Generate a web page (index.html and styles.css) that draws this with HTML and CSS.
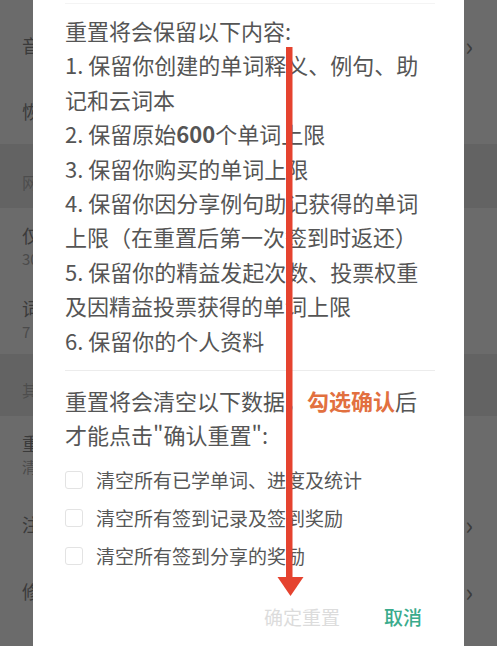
FILE: index.html
```html
<!DOCTYPE html>
<html lang="zh-CN">
<head>
  <meta charset="UTF-8" />
  <meta name="viewport" content="width=device-width, initial-scale=1.0" />
  <title>设置</title>
  <link rel="stylesheet" href="styles.css">
</head>
<body>

  <!-- SETTINGS LIST (behind the dialog) -->
  <div class="settings">
    <div class="row row-1">
      <div class="row-text"><span class="row-title">音频设置</span></div>
      <span class="chevron">&#x203A;</span>
    </div>
    <div class="row row-2">
      <div class="row-text"><span class="row-title">恢复默认设置</span></div>
    </div>
    <div class="section sec-1">网络</div>
    <div class="row row-3">
      <div class="row-text">
        <span class="row-title">仅在WiFi下自动下载</span>
        <span class="row-sub">30M 以内的音频包</span>
      </div>
      <span class="toggle"></span>
    </div>
    <div class="row row-4">
      <div class="row-text">
        <span class="row-title">词库缓存天数</span>
        <span class="row-sub">7</span>
      </div>
    </div>
    <div class="section sec-2">其他</div>
    <div class="row row-5">
      <div class="row-text">
        <span class="row-title">重置学习进度</span>
        <span class="row-sub">清空所有学习记录</span>
      </div>
    </div>
    <div class="row row-6">
      <div class="row-text"><span class="row-title">注销账号</span></div>
      <span class="chevron">&#x203A;</span>
    </div>
    <div class="row row-7">
      <div class="row-text"><span class="row-title">修改密码</span></div>
      <span class="chevron">&#x203A;</span>
    </div>
  </div>

  <div class="mask"></div>

  <!-- RESET DIALOG -->
  <div class="dialog">
    <div class="dialog-body">
      <p class="keep">
        重置将会保留以下内容:<br>
        1. 保留你创建的单词释义、例句、助记和云词本<br>
        2. 保留原始<b>600</b>个单词上限<br>
        3. 保留你购买的单词上限<br>
        4. 保留你因分享例句助记获得的单词上限（在重置后第一次签到时返还）<br>
        5. 保留你的精益发起次数、投票权重及因精益投票获得的单词上限<br>
        6. 保留你的个人资料
      </p>
      <hr class="divider">
      <p class="clear">重置将会清空以下数据，<b class="hint">勾选确认</b>后才能点击"确认重置":</p>

      <label class="check"><span class="box"></span>清空所有已学单词、进度及统计</label>
      <label class="check"><span class="box"></span>清空所有签到记录及签到奖励</label>
      <label class="check"><span class="box"></span>清空所有签到分享的奖励</label>

      <div class="actions">
        <button class="btn btn-confirm" disabled>确定重置</button>
        <button class="btn btn-cancel">取消</button>
      </div>
    </div>
  </div>

  <!-- red guide arrow drawn on top -->
  <svg class="arrow" viewBox="0 0 497 646" xmlns="http://www.w3.org/2000/svg">
    <rect x="286" y="47" width="6.5" height="533" fill="#e5432f"/>
    <polygon points="277.5,577 303.5,577 290.5,596" fill="#e5432f"/>
  </svg>

</body>
</html>
```

FILE: styles.css
```css
/* RESET */
*, *::before, *::after {
  box-sizing: border-box;
  margin: 0;
  padding: 0;
}

html, body {
  width: 497px;
  height: 646px;
  overflow: hidden;
}

body {
  position: relative;
  font-family: "Noto Sans CJK SC", "Noto Sans", sans-serif;
  background: #fff;
}

/* SETTINGS LIST */
.settings {
  padding-top: 12px;
}

.row {
  display: flex;
  align-items: center;
  justify-content: space-between;
  padding: 0 22px;
}

.row-text {
  display: flex;
  flex-direction: column;
}

.row-title {
  font-size: 18px;
  line-height: 26px;
  color: #8a8a8a;
}

.row-sub {
  font-size: 15px;
  line-height: 22px;
  color: #b4b4b4;
}

.row-1 { height: 66px; }
.row-2 { height: 66px; }
.row-3 { height: 76px; }
.row-4 { height: 70px; }
.row-5 { height: 76px; }
.row-6 { height: 64px; }
.row-7 { height: 70px; }

.section {
  display: flex;
  align-items: flex-end;
  padding: 0 22px 14px;
  background: #ededed;
  font-size: 16px;
  color: #b8b8b8;
}

.sec-1 { height: 64px; }
.sec-2 { height: 62px; }

.chevron {
  font-size: 26px;
  line-height: 1;
  color: #8e8e8e;
  margin-right: 2px;
}

.toggle {
  width: 26px;
  height: 26px;
  border-radius: 50%;
  background: #d2d2d2;
  margin-right: 12px;
}

.mask {
  position: absolute;
  inset: 0;
  background: rgba(0, 0, 0, 0.58);
}

/* DIALOG */
.dialog {
  position: absolute;
  top: 0;
  left: 33px;
  width: 431px;
  height: 680px;
  background: #fff;
}

.dialog-body {
  margin: 3px 29px 0 32px;
  padding-top: 9px;
  border-top: 1px solid #f4f4f4;
  color: #555;
}

.keep, .clear {
  font-size: 22px;
  line-height: 34.4px;
}

.keep b {
  font-weight: 700;
}

.divider {
  border: none;
  border-top: 1px solid #ececec;
  margin: 13px 0 12px;
}

.hint {
  color: #e2703f;
  font-weight: 700;
}

.check {
  display: flex;
  align-items: center;
  gap: 13px;
  height: 38px;
  font-size: 19px;
  color: #575757;
}

.check:first-of-type {
  margin-top: 9px;
}

.box {
  width: 18px;
  height: 18px;
  border: 1.5px solid #e3e3e3;
  border-radius: 3px;
}

.actions {
  display: flex;
  justify-content: flex-end;
  gap: 18px;
  margin-top: 22px;
}

.btn {
  background: none;
  border: none;
  font-family: inherit;
  font-size: 19px;
  line-height: 40px;
  padding: 0 13px;
}

.btn-confirm {
  color: #dcdcdc;
}

.btn-cancel {
  color: #3aab8c;
  font-weight: 500;
}

.arrow {
  position: absolute;
  top: 0;
  left: 0;
  width: 497px;
  height: 646px;
  pointer-events: none;
}
```
